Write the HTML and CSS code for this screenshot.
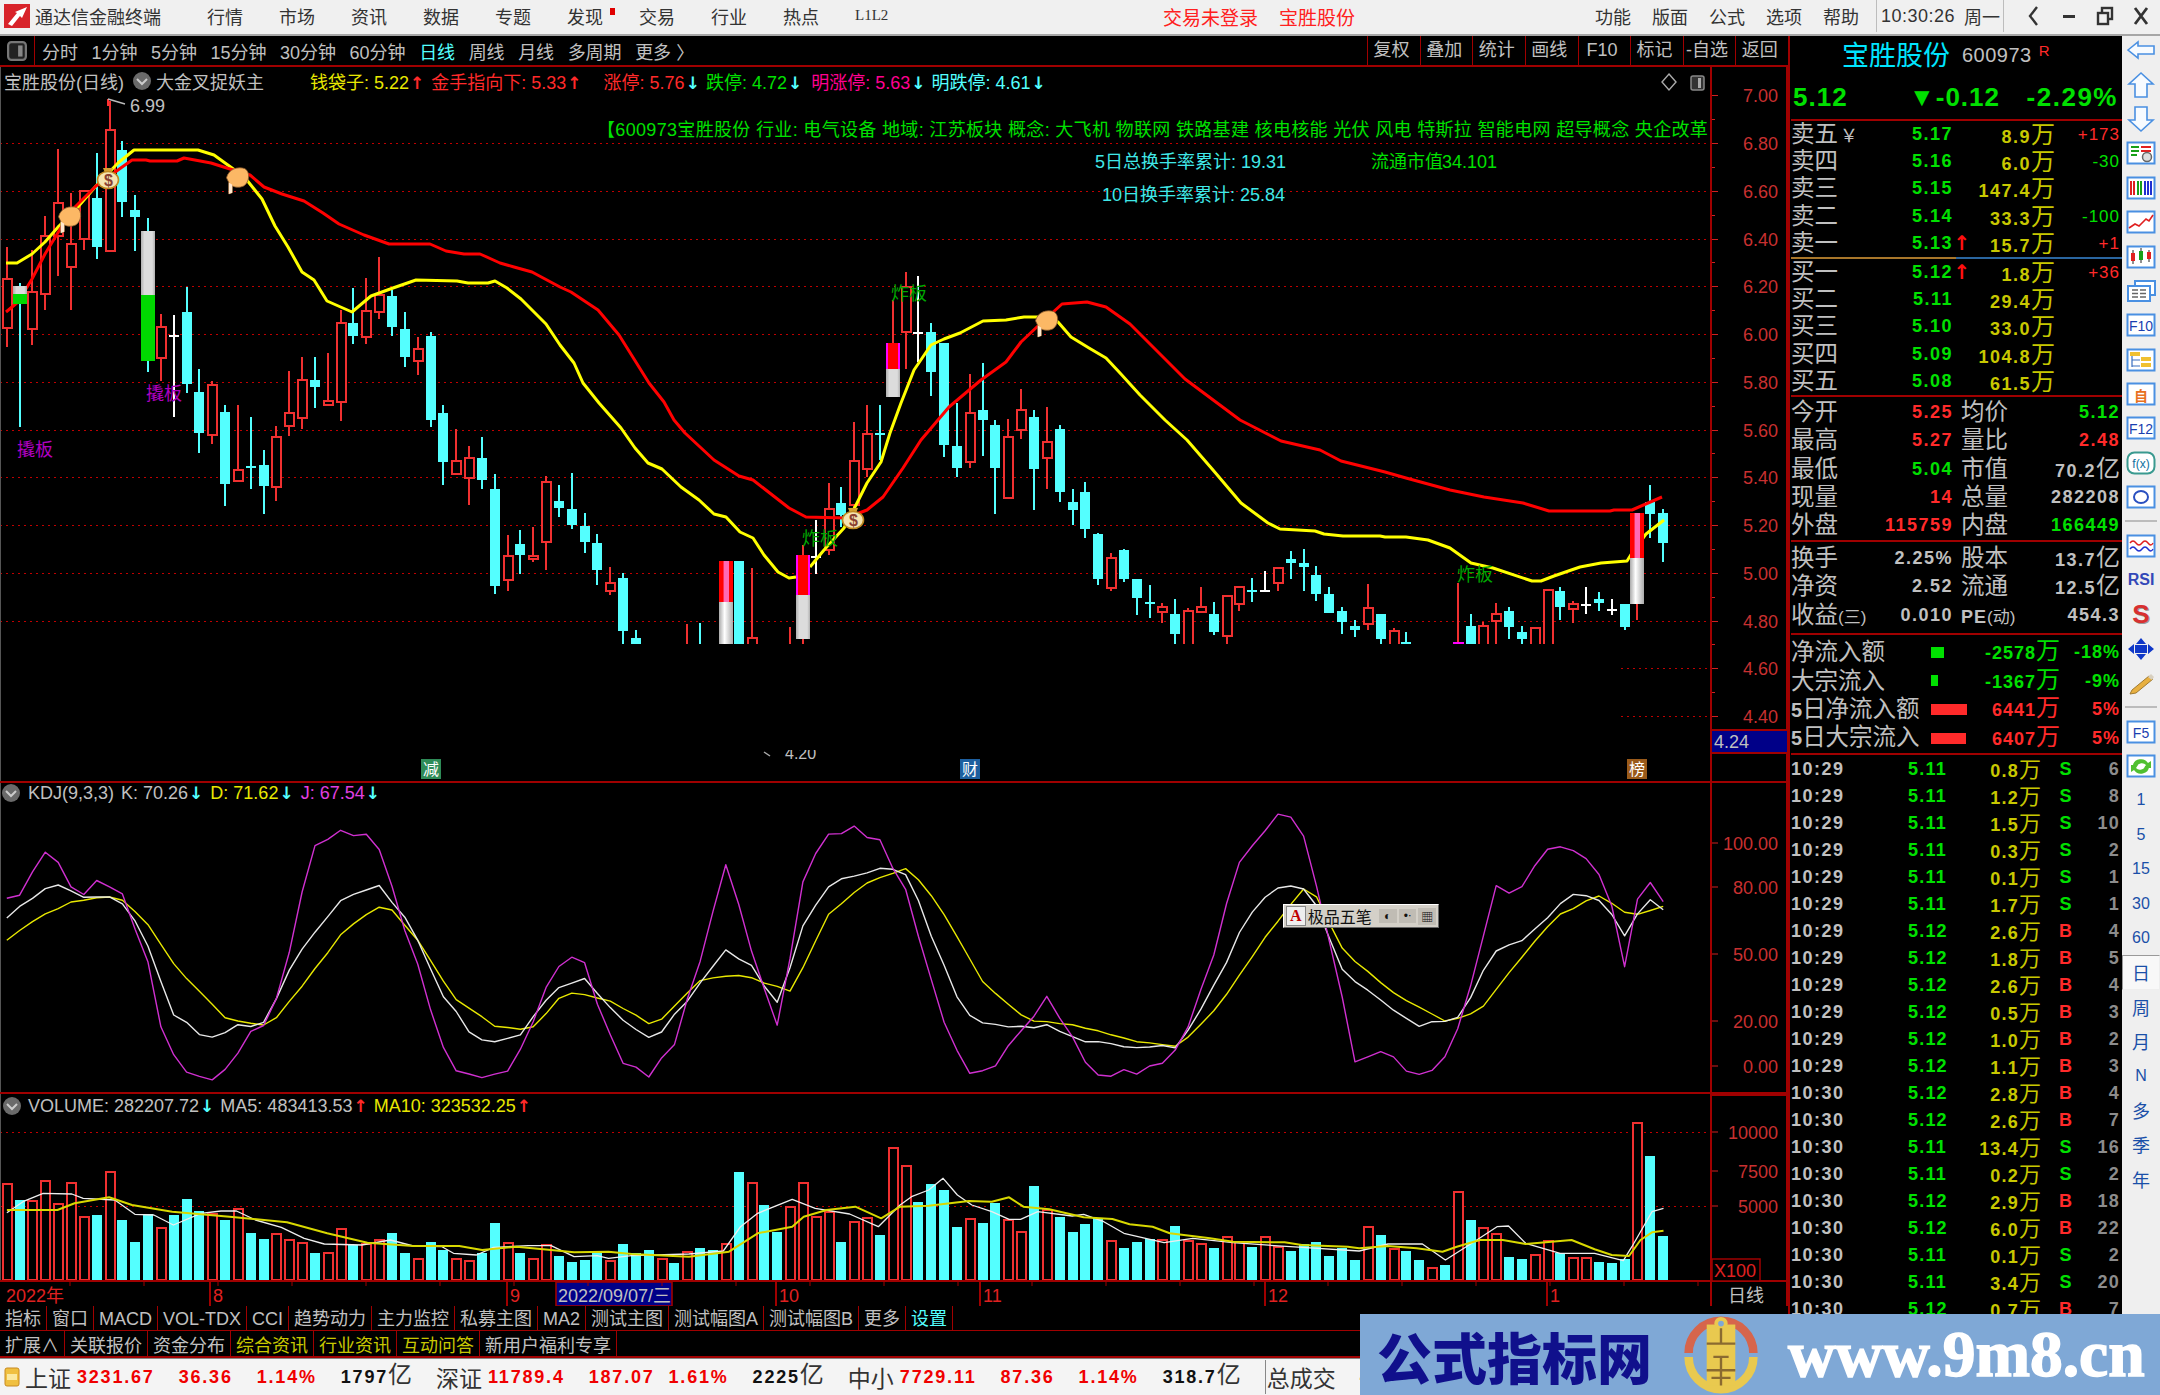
FILE: index.html
```html
<!DOCTYPE html>
<html lang="zh-CN">
<head>
<meta charset="utf-8">
<title>通达信金融终端</title>
<link rel="stylesheet" href="styles.css">
</head>
<body>
<div class="app">
  <header class="titlebar">
    <svg class="logo" viewBox="0 0 26 24"><rect width="26" height="24" fill="#d8232a"/><path d="M4 20 L13 9 L11 8 L23 3 L18 14 L16 12 L8 22Z" fill="#fff"/></svg>
    <span class="appname">通达信金融终端</span>
    <nav class="menu">
      <span>行情</span><span>市场</span><span>资讯</span><span>数据</span><span>专题</span><span class="dotted">发现</span><span>交易</span><span>行业</span><span>热点</span><span class="l1l2">L1L2</span>
    </nav>
    <div class="alerts"><span>交易未登录</span><span>宝胜股份</span></div>
    <div class="sysmenu">
      <span>功能</span><span>版面</span><span>公式</span><span>选项</span><span>帮助</span>
    </div>
    <div class="clock"><span class="time">10:30:26</span><span>周一</span></div>
    <div class="winbtns">
      <svg viewBox="0 0 14 24"><path d="M11 3 L4 12 L11 21" fill="none" stroke="#333" stroke-width="2.4"/></svg>
      <svg viewBox="0 0 14 24"><rect x="1" y="11" width="12" height="3" fill="#333"/></svg>
      <svg viewBox="0 0 18 24"><rect x="6" y="4" width="10" height="11" fill="none" stroke="#333" stroke-width="2.4"/><rect x="2" y="9" width="10" height="11" fill="#f0f0f0" stroke="#333" stroke-width="2.4"/></svg>
      <svg viewBox="0 0 18 24"><path d="M3 4 L15 20 M15 4 L3 20" stroke="#333" stroke-width="2.8"/></svg>
    </div>
  </header>

  <div class="workspace">
    <div class="left">
      <div class="toolbar">
        <div class="tb-icon"><svg viewBox="0 0 18 18"><rect x="1" y="1" width="16" height="16" rx="3" fill="#222" stroke="#777" stroke-width="2"/><rect x="10" y="4" width="4" height="10" fill="#888"/></svg></div>
        <div class="periods">
          <span>分时</span><span>1分钟</span><span>5分钟</span><span>15分钟</span><span>30分钟</span><span>60分钟</span><span class="cyan">日线</span><span>周线</span><span>月线</span><span>多周期</span><span>更多 〉</span>
        </div>
        <div class="tools">
          <span>复权</span><span>叠加</span><span>统计</span><span>画线</span><span>F10</span><span>标记</span><span>-自选</span><span>返回</span>
        </div>
      </div>

      <div class="panes">
        <svg id="chart" class="chart" viewBox="0 67 1788 1239" width="1788" height="1239"></svg>

        <div class="legend legend-main">
          <span class="gray">宝胜股份(日线)</span>
          <svg class="chev" viewBox="0 0 20 20"><circle cx="10" cy="10" r="9" fill="#6a6a6a"/><path d="M5 8 L10 13 L15 8" fill="none" stroke="#ccc" stroke-width="2"/></svg>
          <span class="gray">大金叉捉妖主</span>
          <span class="yellow lg-a">钱袋子: 5.22<i class="red">↑</i></span>
          <span class="red lg-b">金手指向下: 5.33<i class="red">↑</i></span>
          <span class="red lg-c">涨停: 5.76<i class="cyan">↓</i></span>
          <span class="green lg-d">跌停: 4.72<i class="cyan">↓</i></span>
          <span class="pink lg-e">明涨停: 5.63<i class="cyan">↓</i></span>
          <span class="cyan lg-d">明跌停: 4.61<i class="cyan">↓</i></span>
        </div>
        <div class="legend legend-kdj">
          <svg class="chev" viewBox="0 0 20 20"><circle cx="10" cy="10" r="9" fill="#6a6a6a"/><path d="M5 8 L10 13 L15 8" fill="none" stroke="#ccc" stroke-width="2"/></svg>
          <span class="gray">KDJ(9,3,3)</span>
          <span class="gray">K: 70.26<i class="cyan">↓</i></span>
          <span class="yellow">D: 71.62<i class="cyan">↓</i></span>
          <span class="magenta">J: 67.54<i class="cyan">↓</i></span>
        </div>
        <div class="legend legend-vol">
          <svg class="chev" viewBox="0 0 20 20"><circle cx="10" cy="10" r="9" fill="#6a6a6a"/><path d="M5 8 L10 13 L15 8" fill="none" stroke="#ccc" stroke-width="2"/></svg>
          <span class="gray">VOLUME: 282207.72<i class="cyan">↓</i></span>
          <span class="gray">MA5: 483413.53<i class="red">↑</i></span>
          <span class="yellow">MA10: 323532.25<i class="red">↑</i></span>
        </div>

        <div class="ime">
          <span class="ime-a">A</span><span class="ime-t">极品五笔</span>
          <span class="ime-b">◐</span><span class="ime-b">•ᐧ</span><span class="ime-b">▦</span>
        </div>
      </div>

      <div class="tabs tabs-a">
        <span>指标</span><span>窗口</span><span>MACD</span><span>VOL-TDX</span><span>CCI</span><span>趋势动力</span><span>主力监控</span><span>私募主图</span><span>MA2</span><span>测试主图</span><span>测试幅图A</span><span>测试幅图B</span><span>更多</span><span class="cyan">设置</span>
      </div>
      <div class="tabs tabs-b">
        <span>扩展∧</span><span>关联报价</span><span>资金分布</span><span class="olive">综合资讯</span><span class="olive">行业资讯</span><span class="olive">互动问答</span><span>新用户福利专享</span>
      </div>
    </div>

    <section class="quote">
      <div class="q-name"><span class="q-title">宝胜股份</span><span class="q-code">600973</span><sup class="q-r">R</sup></div>
      <div class="q-price"><b class="p1">5.12</b><b class="p2">▼-0.12</b><b class="p3">-2.29%</b></div>

      <div class="book sec-sell">
        <div class="bk"><span class="lb">卖五<small>￥</small></span><b class="g">5.17</b><i></i><b class="y">8.9<em>万</em></b><s class="r">+173</s></div>
        <div class="bk"><span class="lb">卖四</span><b class="g">5.16</b><i></i><b class="y">6.0<em>万</em></b><s class="g">-30</s></div>
        <div class="bk"><span class="lb">卖三</span><b class="g">5.15</b><i></i><b class="y">147.4<em>万</em></b><s></s></div>
        <div class="bk"><span class="lb">卖二</span><b class="g">5.14</b><i></i><b class="y">33.3<em>万</em></b><s class="g">-100</s></div>
        <div class="bk"><span class="lb">卖一</span><b class="g">5.13</b><i>↑</i><b class="y">15.7<em>万</em></b><s class="r">+1</s></div>
      </div>
      <div class="split"></div>
      <div class="book sec-buy">
        <div class="bk"><span class="lb">买一</span><b class="g">5.12</b><i>↑</i><b class="y">1.8<em>万</em></b><s class="r">+36</s></div>
        <div class="bk"><span class="lb">买二</span><b class="g">5.11</b><i></i><b class="y">29.4<em>万</em></b><s></s></div>
        <div class="bk"><span class="lb">买三</span><b class="g">5.10</b><i></i><b class="y">33.0<em>万</em></b><s></s></div>
        <div class="bk"><span class="lb">买四</span><b class="g">5.09</b><i></i><b class="y">104.8<em>万</em></b><s></s></div>
        <div class="bk"><span class="lb">买五</span><b class="g">5.08</b><i></i><b class="y">61.5<em>万</em></b><s></s></div>
      </div>

      <div class="stats sec-a">
        <span class="lb">今开</span><b class="r">5.25</b><span class="lb l2">均价</span><b class="g">5.12</b>
        <span class="lb">最高</span><b class="r">5.27</b><span class="lb l2">量比</span><b class="r">2.48</b>
        <span class="lb">最低</span><b class="g">5.04</b><span class="lb l2">市值</span><b class="w">70.2<em>亿</em></b>
        <span class="lb">现量</span><b class="r">14</b><span class="lb l2">总量</span><b class="w">282208</b>
        <span class="lb">外盘</span><b class="r">115759</b><span class="lb l2">内盘</span><b class="g">166449</b>
      </div>
      <div class="stats sec-b">
        <span class="lb">换手</span><b class="w">2.25%</b><span class="lb l2">股本</span><b class="w">13.7<em>亿</em></b>
        <span class="lb">净资</span><b class="w">2.52</b><span class="lb l2">流通</span><b class="w">12.5<em>亿</em></b>
        <span class="lb">收益<small class="paren">(三)</small></span><b class="w">0.010</b><span class="lb l2"><b class="w pe">PE</b><small class="paren">(动)</small></span><b class="w">454.3</b>
      </div>

      <div class="flow">
        <div class="fl"><span class="lb">净流入额</span><span class="bar barg w13"></span><b class="g">-2578<em>万</em></b><b class="g">-18%</b></div>
        <div class="fl"><span class="lb">大宗流入</span><span class="bar barg w7"></span><b class="g">-1367<em>万</em></b><b class="g">-9%</b></div>
        <div class="fl"><span class="lb"><b class="w">5</b>日净流入额</span><span class="bar barr w36"></span><b class="r">6441<em>万</em></b><b class="r">5%</b></div>
        <div class="fl"><span class="lb"><b class="w">5</b>日大宗流入</span><span class="bar barr w35"></span><b class="r">6407<em>万</em></b><b class="r">5%</b></div>
      </div>

      <div class="ticks">
        <div class="tk"><b class="w">10:29</b><b class="g">5.11</b><b class="y">0.8<em>万</em></b><b class="g bs">S</b><b class="d">6</b></div>
        <div class="tk"><b class="w">10:29</b><b class="g">5.11</b><b class="y">1.2<em>万</em></b><b class="g bs">S</b><b class="d">8</b></div>
        <div class="tk"><b class="w">10:29</b><b class="g">5.11</b><b class="y">1.5<em>万</em></b><b class="g bs">S</b><b class="d">10</b></div>
        <div class="tk"><b class="w">10:29</b><b class="g">5.11</b><b class="y">0.3<em>万</em></b><b class="g bs">S</b><b class="d">2</b></div>
        <div class="tk"><b class="w">10:29</b><b class="g">5.11</b><b class="y">0.1<em>万</em></b><b class="g bs">S</b><b class="d">1</b></div>
        <div class="tk"><b class="w">10:29</b><b class="g">5.11</b><b class="y">1.7<em>万</em></b><b class="g bs">S</b><b class="d">1</b></div>
        <div class="tk"><b class="w">10:29</b><b class="g">5.12</b><b class="y">2.6<em>万</em></b><b class="r bs">B</b><b class="d">4</b></div>
        <div class="tk"><b class="w">10:29</b><b class="g">5.12</b><b class="y">1.8<em>万</em></b><b class="r bs">B</b><b class="d">5</b></div>
        <div class="tk"><b class="w">10:29</b><b class="g">5.12</b><b class="y">2.6<em>万</em></b><b class="r bs">B</b><b class="d">4</b></div>
        <div class="tk"><b class="w">10:29</b><b class="g">5.12</b><b class="y">0.5<em>万</em></b><b class="r bs">B</b><b class="d">3</b></div>
        <div class="tk"><b class="w">10:29</b><b class="g">5.12</b><b class="y">1.0<em>万</em></b><b class="r bs">B</b><b class="d">2</b></div>
        <div class="tk"><b class="w">10:29</b><b class="g">5.12</b><b class="y">1.1<em>万</em></b><b class="r bs">B</b><b class="d">3</b></div>
        <div class="tk"><b class="w">10:30</b><b class="g">5.12</b><b class="y">2.8<em>万</em></b><b class="r bs">B</b><b class="d">4</b></div>
        <div class="tk"><b class="w">10:30</b><b class="g">5.12</b><b class="y">2.6<em>万</em></b><b class="r bs">B</b><b class="d">7</b></div>
        <div class="tk"><b class="w">10:30</b><b class="g">5.11</b><b class="y">13.4<em>万</em></b><b class="g bs">S</b><b class="d">16</b></div>
        <div class="tk"><b class="w">10:30</b><b class="g">5.11</b><b class="y">0.2<em>万</em></b><b class="g bs">S</b><b class="d">2</b></div>
        <div class="tk"><b class="w">10:30</b><b class="g">5.12</b><b class="y">2.9<em>万</em></b><b class="r bs">B</b><b class="d">18</b></div>
        <div class="tk"><b class="w">10:30</b><b class="g">5.12</b><b class="y">6.0<em>万</em></b><b class="r bs">B</b><b class="d">22</b></div>
        <div class="tk"><b class="w">10:30</b><b class="g">5.11</b><b class="y">0.1<em>万</em></b><b class="g bs">S</b><b class="d">2</b></div>
        <div class="tk"><b class="w">10:30</b><b class="g">5.11</b><b class="y">3.4<em>万</em></b><b class="g bs">S</b><b class="d">20</b></div>
        <div class="tk"><b class="w">10:30</b><b class="g">5.12</b><b class="y">0.7<em>万</em></b><b class="r bs">B</b><b class="d">7</b></div>
      </div>
    </section>

    <aside class="sidebar">
      <div class="si first"><svg viewBox="0 0 30 24"><path d="M2 12 L12 4 V8 H28 V16 H12 V20Z" class="ol"/></svg></div>
      <div class="si"><svg viewBox="0 0 30 28"><path d="M15 2 L27 13 H21 V26 H9 V13 H3Z" class="ol"/></svg></div>
      <div class="si"><svg viewBox="0 0 30 28"><path d="M15 26 L27 15 H21 V2 H9 V15 H3Z" class="ol"/></svg></div>
      <div class="si"><svg viewBox="0 0 30 24"><rect x="1.5" y="1.5" width="27" height="21" class="bx"/><path d="M5 6h8M5 10h8M5 14h6" stroke="#18a018" stroke-width="2"/><path d="M15 6h10M15 10h10" stroke="#e02020" stroke-width="2"/><circle cx="21" cy="16" r="4.5" fill="#ddd" stroke="#666" stroke-width="1.5"/></svg></div>
      <div class="si"><svg viewBox="0 0 30 24"><rect x="1.5" y="1.5" width="27" height="21" class="bx"/><path d="M5 5v14M8 5v14" stroke="#e02020" stroke-width="2"/><path d="M12 5v14M15 5v14" stroke="#18a018" stroke-width="2"/><path d="M19 5v14M22 5v14M25 5v14" stroke="#2030d0" stroke-width="2"/></svg></div>
      <div class="si"><svg viewBox="0 0 30 24"><rect x="1.5" y="1.5" width="27" height="21" class="bx"/><path d="M3 18 L9 14 L13 16 L20 9 L23 11 L27 5" fill="none" stroke="#e02020" stroke-width="1.6"/></svg></div>
      <div class="si"><svg viewBox="0 0 30 24"><rect x="1.5" y="1.5" width="27" height="21" class="bx"/><path d="M7 5v14M15 3v15M23 5v12" stroke="#222" stroke-width="1"/><rect x="5" y="8" width="4" height="8" fill="#e02020"/><rect x="13" y="6" width="4" height="9" fill="#18a018"/><rect x="21" y="7" width="4" height="7" fill="#e02020"/></svg></div>
      <div class="si"><svg viewBox="0 0 30 24"><rect x="9" y="2" width="20" height="14" class="bx"/><rect x="2" y="7" width="22" height="15" class="bx"/><path d="M6 11h6M14 11h6M6 14.500h6M14 14.500h6M6 18h6M14 18h6" stroke="#666" stroke-width="1.6"/></svg></div>
      <div class="si"><svg viewBox="0 0 30 24"><rect x="1.5" y="1.5" width="27" height="21" class="bx"/><text x="15" y="18" class="ict">F10</text></svg></div>
      <div class="si"><svg viewBox="0 0 30 24"><rect x="1.5" y="1.5" width="27" height="21" class="bx"/><path d="M6 8 V19 M6 12 H14 M6 18 H14" stroke="#3a70c0" stroke-width="1.2" fill="none"/><rect x="4" y="4" width="10" height="4" fill="#f0c030"/><rect x="15" y="9" width="10" height="4" fill="#f0c030"/><rect x="15" y="15" width="10" height="4" fill="#f0c030"/></svg></div>
      <div class="si"><svg viewBox="0 0 30 24"><rect x="1.5" y="1.5" width="27" height="21" class="bx"/><text x="15" y="18.500" class="ict org">自</text></svg></div>
      <div class="si"><svg viewBox="0 0 30 24"><rect x="1.5" y="1.5" width="27" height="21" class="bx"/><text x="15" y="18" class="ict">F12</text></svg></div>
      <div class="si"><svg viewBox="0 0 30 24"><rect x="1.5" y="1.5" width="27" height="21" rx="7" class="bxt"/><text x="15" y="17" class="ict teal">f(x)</text></svg></div>
      <div class="si"><svg viewBox="0 0 30 24"><rect x="1.5" y="1.5" width="27" height="21" class="bx"/><ellipse cx="15" cy="12" rx="7" ry="6" fill="none" stroke="#2a50c0" stroke-width="2"/></svg></div>
      <div class="sep"></div>
      <div class="si"><svg viewBox="0 0 30 24"><rect x="1.5" y="1.5" width="27" height="21" class="bx"/><path d="M4 9 Q7 5 10 9 T16 9 T22 9 T27 9" fill="none" stroke="#e02020" stroke-width="1.4"/><path d="M4 15 Q7 11 10 15 T16 15 T22 15 T27 15" fill="none" stroke="#2030d0" stroke-width="1.4"/></svg></div>
      <div class="si"><span class="rsi">RSI</span></div>
      <div class="si"><span class="sred">S</span></div>
      <div class="si"><svg viewBox="0 0 30 24"><path d="M15 1 L20 7 H10Z M15 23 L20 17 H10Z M2 12 L8 7 V17Z M28 12 L22 7 V17Z" fill="#1038c8"/><rect x="9" y="8" width="12" height="8" fill="#1038c8"/></svg></div>
      <div class="si"><svg viewBox="0 0 30 24"><path d="M6 19 L23 5 L27 8 L10 22 L4 23Z" fill="#e8b040" stroke="#a07a30"/><path d="M22 6 L26 9 L28 6 L25 3Z" fill="#d8d0c0"/></svg></div>
      <div class="sep"></div>
      <div class="si"><svg viewBox="0 0 30 24"><rect x="1.5" y="1.5" width="27" height="21" class="bx"/><text x="15" y="18" class="ict">F5</text></svg></div>
      <div class="si"><svg viewBox="0 0 30 24"><rect x="1.5" y="1.5" width="27" height="21" class="bx"/><path d="M7 11 A8 7 0 0 1 22 9 L25 7 L25 14 L18 14 L20 11 A5 4 0 0 0 11 12Z M23 13 A8 7 0 0 1 8 16 L5 18 L5 11 L12 11 L10 14 A5 4 0 0 0 19 12Z" fill="#50c030"/></svg></div>
      <div class="si num">1</div><div class="si num">5</div><div class="si num">15</div><div class="si num">30</div><div class="si num">60</div>
      <div class="si zh active">日</div><div class="si zh">周</div><div class="si zh">月</div><div class="si num">N</div><div class="si zh">多</div><div class="si zh">季</div><div class="si zh">年</div>
    </aside>
  </div>

  <footer class="status">
    <svg class="st-ic" viewBox="0 0 16 20"><rect x="1" y="1" width="14" height="18" rx="2" fill="#f0c040" stroke="#c88a20"/><rect x="3" y="7" width="10" height="6" fill="#fbe9a0"/></svg>
    <span class="st-l">上证</span><b>3231.67</b><b>36.36</b><b>1.14%</b><b class="k">1797<em>亿</em></b>
    <span class="st-l">深证</span><b>11789.4</b><b>187.07</b><b class="st-tight">1.61%</b><b class="k">2225<em>亿</em></b>
    <span class="st-l">中小</span><b>7729.11</b><b>87.36</b><b>1.14%</b><b class="k">318.7<em>亿</em></b>
    <span class="st-div"></span><span class="st-l st-t">总成交</span><b class="k">4</b>
  </footer>

  <div class="watermark">
    <span class="wm-cn">公式指标网</span>
    <svg class="wm-logo" viewBox="0 0 80 84">
      <path d="M6 40 A34 34 0 0 1 74 40" fill="none" stroke="#d6654c" stroke-width="9"/>
      <path d="M6 44 A34 34 0 0 0 74 44" fill="none" stroke="#e9c94f" stroke-width="9"/>
      <rect x="25" y="10" width="30" height="64" fill="#e9c94f"/>
      <circle cx="40" cy="9" r="7" fill="#e9c94f"/><circle cx="40" cy="9" r="3" fill="#7fa8d6"/>
      <path d="M25 30 H55 M40 14 V30 M32 44 H48 M25 58 H55 M40 44 V74 M30 66 L50 66" stroke="#8a6a30" stroke-width="2.500" fill="none"/>
    </svg>
    <span class="wm-en">www.9m8.cn</span>
  </div>
</div>
<script src="chart.js"></script>
</body>
</html>
```
FILE: styles.css
```css
* { box-sizing: border-box; }
html, body { margin: 0; padding: 0; background: #000; }
body { width: 2160px; height: 1395px; overflow: hidden; font-family: "Liberation Sans", "Noto Sans CJK SC", sans-serif; font-size: 18px; color: #c0c0c0; }
i, em, s { font-style: normal; text-decoration: none; }
.app { position: relative; width: 2160px; height: 1395px; display: flex; flex-direction: column; }

.cyan { color: #54ffff; }
.gray { color: #c0c0c0; }
.yellow { color: #e8e800; }
.red { color: #ff2a2a; }
.green { color: #00e000; }
.pink { color: #ff0090; }
.magenta { color: #e040e0; }
.olive { color: #c8c800; }

/* title bar */
.titlebar { height: 36px; flex: none; display: flex; align-items: center; padding-bottom: 2px; background: #f0f0f0; border-bottom: 2px solid #a6a6a6; color: #333; }
.logo { width: 26px; height: 24px; margin-left: 4px; flex: none; }
.appname { margin-left: 5px; width: 127px; white-space: nowrap; }
.menu { display: flex; gap: 36px; margin-left: 45px; width: 686px; }
.menu span { white-space: nowrap; }
.dotted { position: relative; }
.dotted::after { content: ""; position: absolute; right: -12px; top: 5px; width: 5px; height: 7px; background: #e00000; }
.l1l2 { font-size: 15px; font-family: "Liberation Serif", serif; line-height: 24px; }
.alerts { display: flex; gap: 21px; margin-left: 270px; color: #ff2020; white-space: nowrap; font-size: 19px; }
.sysmenu { display: flex; gap: 21px; margin-left: 240px; white-space: nowrap; }
.clock { display: flex; gap: 8px; align-items: center; margin-left: 17px; padding: 0 3px 0 4px; height: 32px; border-left: 1px solid #bdbdbd; border-right: 1px solid #bdbdbd; white-space: nowrap; }
.time { letter-spacing: .5px; width: 75px; }
.winbtns { display: flex; align-items: center; gap: 18px; margin-left: 20px; }
.winbtns svg { height: 24px; width: 18px; }

/* layout */
.workspace { flex: 1; display: flex; min-height: 0; }
.left { width: 1788px; flex: none; display: flex; flex-direction: column; }
.toolbar { height: 31px; flex: none; display: flex; align-items: center; background: #000; border-bottom: 2px solid #a00000; }
.tb-icon { width: 35px; height: 29px; border-right: 1px solid #a00000; display: flex; align-items: center; justify-content: center; flex: none; }
.tb-icon svg { width: 20px; height: 20px; }
.periods { display: flex; gap: 13.500px; margin-left: 7px; white-space: nowrap; flex: 1; }
.tools { display: flex; flex: none; height: 29px; }
.tools span { width: 52.600px; padding-right: 5px; border-left: 1px solid #a00000; text-align: center; line-height: 29px; white-space: nowrap; }

.panes { position: relative; height: 1239px; flex: none; background: #000; }
.chart { display: block; }
.legend { position: absolute; left: 0; display: flex; align-items: center; height: 22px; white-space: nowrap; }
.legend i { margin-left: 1px; font-family: "DejaVu Sans", sans-serif; font-weight: bold; font-size: 17px; }
.chev { width: 20px; height: 20px; flex: none; }
.legend-main { top: 3px; padding-left: 4px; gap: 8px; }
.legend-main .chev { margin-right: -4px; }
.lg-a { margin-left: 38px; }
.lg-b { margin-left: -1px; }
.lg-c { margin-left: 14px; }
.lg-d { margin-left: -2px; }
.lg-e { margin-left: 1px; }
.legend-kdj { top: 715px; padding-left: 1px; gap: 7px; }
.legend-vol { top: 1028px; padding-left: 2px; gap: 6px; }
.ime { position: absolute; left: 1283px; top: 837px; width: 156px; height: 24px; display: flex; align-items: center; gap: 2px; padding: 0 2px; background: #d4d0c8; border: 1px solid; border-color: #fff #666 #666 #fff; color: #111; font-size: 16px; }
.ime-a { width: 20px; text-align: center; color: #c00000; background: #eee; border: 1px solid #888; font-family: "Liberation Serif", serif; font-weight: bold; }
.ime-t { width: 70px; white-space: nowrap; }
.ime-b { width: 18px; font-size: 12px; text-align: center; background: #c0bcb4; overflow: hidden; white-space: nowrap; }

.tabs { flex: none; display: flex; background: #000; border-bottom: 2px solid #a00000; white-space: nowrap; }
.tabs span { padding: 0 5px; border-right: 1px solid #a00000; }
.tabs-a { height: 25px; line-height: 26px; border-bottom-width: 1px; }
.tabs-b { height: 27px; line-height: 30px; }

/* quote panel */
.quote { width: 334px; flex: none; display: flex; flex-direction: column; background: #000; border-left: 2px solid #a00000; overflow: hidden; padding-left: 1px; }
.q-name { height: 30px; flex: none; display: flex; align-items: center; padding: 9px 0 0 51px; white-space: nowrap; }
.q-title { color: #00e5ff; font-size: 27px; width: 120px; line-height: 30px; }
.q-code { color: #c0c0c0; font-size: 20px; letter-spacing: .5px; }
.q-r { color: #ff2a2a; font-size: 15px; margin-left: 7px; position: relative; top: -5px; line-height: 10px; }
.q-price { height: 55px; flex: none; display: flex; align-items: center; border-bottom: 2px solid #a00000; padding: 9px 4px 0 2px; color: #00e000; font-size: 26px; white-space: nowrap; letter-spacing: 1px; }
.p1 { width: 116px; }
.p2 { width: 107px; }
.p3 { flex: 1; text-align: right; letter-spacing: 1.500px; }

.book { flex: none; padding-right: 4px; }
.bk { display: grid; grid-template-columns: 70px 90px 18px 84px 65px; height: 27.200px; line-height: 27.200px; padding-left: 2px; white-space: nowrap; }
.lb { font-size: 23.500px; color: #c0c0c0; white-space: nowrap; margin-left: -2px; }
.lb small { font-size: 18px; margin-left: 2px; }
.lb .paren { font-size: 17px; margin-left: 0; }
.bk b, .bk s { text-align: right; letter-spacing: 1.500px; font-weight: bold; }
.bk s { font-weight: normal; font-size: 17px; letter-spacing: 1px; }
.bk i { color: #ff1010; font-family: "DejaVu Sans", sans-serif; font-weight: bold; text-align: center; font-size: 20px; }
b { font-weight: bold; }
.g { color: #00e000; }
.r { color: #ff2a2a; }
.y { color: #c8c800; }
.w { color: #c0c0c0; }
.d { color: #8c8c8c; }
em { font-size: 24px; font-weight: normal; letter-spacing: 0; }
.sec-sell { height: 136px; }
.split { height: 2px; flex: none; background: linear-gradient(to right, #a8762a 0 50%, #2a66a0 50% 100%); }
.sec-buy { height: 138px; border-bottom: 2px solid #a00000; }

.stats { flex: none; display: grid; grid-template-columns: 60px 100px 68px 99px; grid-auto-rows: 28.300px; line-height: 28.300px; padding-left: 2px; border-bottom: 2px solid #a00000; white-space: nowrap; }
.stats > b { text-align: right; letter-spacing: 1.500px; }
.stats .l2 { padding-left: 8px; margin-left: 0; }
.stats .pe { font-size: 18px; letter-spacing: 1px; }
.sec-a { height: 145px; padding-top: 1px; }
.sec-b { height: 93px; padding-top: 2px; }

.flow { flex: none; height: 120px; padding: 2px 0 0 2px; border-bottom: 2px solid #a00000; }
.fl { display: grid; grid-template-columns: 138px 52px 77px 60px; height: 28.600px; line-height: 28.600px; align-items: center; white-space: nowrap; }
.fl > b { text-align: right; letter-spacing: 1px; }
.fl .lb b { font-size: 20px; }
.bar { display: block; height: 11px; }
.barg { background: #00e000; }
.barr { background: #ff2a2a; }
.w13 { width: 13px; }
.w7 { width: 7px; }
.w36 { width: 36px; }
.w35 { width: 35px; }

.ticks { flex: none; padding-top: 1px; }
.tk { display: grid; grid-template-columns: 115px 50px 83px 50px 29px; height: 27px; line-height: 27px; padding-left: 2px; white-space: nowrap; }
.tk b { letter-spacing: 1.200px; }
.tk b:first-child { margin-left: -2px; letter-spacing: 1.500px; }
.tk b:nth-child(3), .tk b:nth-child(5) { text-align: right; }
.tk em { font-size: 22px; }
.tk .bs { text-align: center; }

/* right sidebar */
.sidebar { width: 38px; flex: none; background: #efefef; display: flex; flex-direction: column; align-items: center; }
.si { height: 34.400px; width: 100%; flex: none; display: flex; align-items: center; justify-content: center; }
.si.first { margin-top: -3px; }
.si svg { width: 30px; height: 28px; }
.sep { height: 14px; width: 32px; flex: none; position: relative; }
.sep::after { content: ""; position: absolute; left: 0; right: 0; top: 6px; height: 2px; background: #bcbcbc; }
.ol { fill: #f7fbff; stroke: #4a90e2; stroke-width: 1.6; }
.bx { fill: #fff; stroke: #4a90e2; stroke-width: 2; }
.bxt { fill: #fff; stroke: #3a9a90; stroke-width: 2; }
.ict { font: 14px "Liberation Sans", sans-serif; fill: #1a3fb0; text-anchor: middle; }
.org { fill: #e87020; font-family: "Noto Sans CJK SC", sans-serif; font-weight: bold; }
.teal { fill: #1070a0; font-size: 12px; }
.rsi { color: #3348b8; font-weight: bold; font-size: 16px; }
.sred { color: #d83030; font-weight: bold; font-size: 26px; text-shadow: 1px 1px 0 #999; }
.num { color: #1a4fa8; font-size: 16px; }
.zh { color: #1a4fa8; font-size: 18px; }
.active { background: #f8f8f8; border: 1px solid; border-color: #999 #eee #eee #999; }

/* status */
.status { height: 37px; flex: none; display: flex; align-items: center; gap: 24px; background: #f4f4f4; border-top: 1px solid #888; white-space: nowrap; overflow: hidden; }
.status b { color: #f00000; font-size: 18px; letter-spacing: 1.800px; }
.status b.k { color: #111; }
.status em { color: #333; letter-spacing: 0; line-height: 0; }
.st-ic { width: 16px; height: 20px; margin: 0 -19px 0 4px; flex: none; }
.st-l { font-size: 23px; color: #333; margin-right: -18px; }
.status .st-tight { margin-left: -10px; }
.st-t { margin-right: 0; margin-left: -23px; }
.st-div { width: 1px; height: 34px; background: #888; margin-right: 0; }

/* watermark */
.watermark { position: absolute; left: 1360px; top: 1314px; right: 0; bottom: 0; display: flex; align-items: center; background: #7fa8d6; overflow: hidden; }
.wm-cn { margin-left: 17px; width: 304px; font-family: "Noto Sans CJK SC", sans-serif; font-weight: 900; font-size: 55px; line-height: 80px; color: #10108c; white-space: nowrap; }
.wm-logo { width: 80px; height: 80px; flex: none; }
.wm-en { margin-left: 27px; font-family: "Liberation Serif", serif; font-weight: bold; font-size: 65.500px; color: #fff; -webkit-text-stroke: 1.500px #fff; white-space: nowrap; }

/* chart text */
.chart text { font-family: "Liberation Sans", "Noto Sans CJK SC", sans-serif; font-size: 18px; }
.ax { fill: #c83030; text-anchor: end; }
.tx-g { fill: #00e000; }
.chart .tx-long { letter-spacing: .33px; }
.tx-c { fill: #40e8e8; }
.tx-lg { fill: #00a800; }
.tx-p { fill: #b000c0; }
.tx-w { fill: #c0c0c0; }
.tx-r { fill: #e02020; }
.tx-k { fill: #fff; text-anchor: middle; }
.chart text.sm { font-size: 16px; }
```
FILE: chart.js
```js
(function () {
  var svg = document.getElementById('chart');
  var cx = function (i) { return Math.round(6.8 + 12.84 * i); };
  var RED = '#f03030', CY = '#54ffff', DK = '#a00000';
  // [i, high, bodyTop, bodyBottom, low, type]  r hollow red, c cyan, w white doji, n cyan doji, m magenta doji
  var K = [
    [0,247,279,328,347,'r'],[2,250,292,329,345,'r'],[3,216,236,294,310,'r'],[4,149,203,236,276,'r'],[5,193,244,267,310,'r'],[6,191,191,239,250,'r'],
    [7,153,198,247,259,'c'],[8,101,130,251,251,'r'],[9,141,150,202,217,'c'],[10,195,210,217,251,'c'],[12,314,327,358,381,'r'],[13,315,335,335,417,'w'],
    [14,287,312,384,393,'c'],[15,369,392,433,453,'c'],[16,381,385,435,444,'r'],[17,405,412,484,506,'c'],[18,405,470,481,481,'r'],[19,417,466,466,489,'n'],
    [20,450,465,486,514,'c'],[21,426,437,487,501,'r'],[22,371,413,426,436,'r'],[23,357,380,418,429,'r'],[24,357,380,387,408,'c'],[25,353,401,405,405,'r'],
    [26,310,323,402,421,'r'],[27,288,323,336,344,'c'],[28,278,311,337,344,'r'],[29,257,295,312,319,'r'],[30,290,296,327,336,'c'],[31,312,329,357,367,'c'],
    [32,337,349,361,375,'r'],[33,332,336,420,427,'c'],[34,405,413,462,485,'c'],[35,429,461,474,474,'r'],[36,446,458,478,505,'r'],[37,437,458,480,489,'c'],
    [38,474,489,586,594,'c'],[39,535,556,580,591,'r'],[40,530,544,555,574,'c'],[41,527,556,559,562,'r'],[42,476,482,542,570,'r'],[43,485,501,508,517,'c'],
    [44,473,509,525,529,'c'],[45,513,526,542,553,'c'],[46,534,543,570,585,'c'],[47,567,583,591,595,'r'],[48,573,578,631,650,'c'],[49,630,638,660,660,'c'],
    [53,624,660,660,660,'r'],[54,623,660,660,660,'n'],[57,561,561,660,660,'c'],[58,568,638,660,660,'r'],[61,627,660,660,660,'r'],
    [63,520,556,556,574,'w'],[64,483,509,550,555,'r'],[65,487,503,515,527,'c'],[66,422,461,505,515,'r'],[67,405,434,469,477,'r'],[68,405,433,433,460,'n'],
    [70,272,287,332,369,'r'],[71,276,332,332,362,'w'],[72,323,332,372,396,'c'],[73,343,343,445,457,'c'],[74,403,446,468,477,'c'],[75,374,413,462,468,'r'],
    [76,363,410,420,456,'c'],[77,420,425,468,514,'c'],[78,419,437,498,498,'r'],[79,389,410,430,439,'r'],[80,410,417,469,510,'c'],[81,407,442,458,489,'r'],
    [82,425,429,492,502,'c'],[83,489,502,510,525,'c'],[84,482,492,529,538,'c'],[85,533,534,579,585,'c'],[86,553,558,588,591,'r'],
    [87,549,550,579,582,'c'],[88,579,579,598,615,'c'],[89,585,602,602,618,'n'],[90,603,607,612,623,'r'],[91,599,614,634,650,'c'],[92,608,611,655,655,'r'],
    [93,587,607,612,612,'r'],[94,602,614,632,635,'c'],[95,596,596,636,650,'r'],[96,587,587,604,611,'r'],[97,578,590,590,602,'n'],[98,571,590,590,590,'w'],
    [99,568,568,583,591,'r'],[100,551,559,563,579,'c'],[101,549,563,567,591,'c'],[102,566,575,594,601,'c'],[103,587,594,613,613,'c'],[104,607,611,622,634,'c'],
    [105,620,626,630,637,'c'],[106,584,608,624,630,'r'],[107,614,614,639,650,'c'],[108,628,631,655,655,'r'],[109,632,642,655,655,'c'],
    [113,583,642,642,660,'m'],[114,614,626,660,660,'c'],[115,622,626,660,660,'r'],[116,603,614,621,650,'r'],[117,607,611,627,639,'c'],[118,626,632,639,650,'c'],
    [119,628,628,660,660,'r'],[120,590,590,660,660,'r'],[121,587,591,607,620,'c'],[122,601,604,609,623,'r'],[123,587,604,604,614,'w'],[124,592,599,603,611,'c'],
    [125,599,609,609,615,'w'],[126,604,604,627,630,'c'],[128,485,502,514,538,'c'],[129,509,513,543,562,'c']
  ];
  // [i, top, mid, bottom, wickTop, wickBottom, topFill, bottomFill]
  var SP = [
    [1,286,294,304,283,427,'url(#gw)','#00d800',CY],
    [11,231,295,361,218,372,'url(#gw)','#00d800',CY],
    [56,561,602,650,561,561,'url(#pk)','url(#wh)',RED],
    [62,555,595,639,545,650,'url(#mg)','url(#gw)',RED],
    [69,343,369,397,300,397,'url(#mg)','url(#gw)',RED],
    [127,513,558,604,513,620,'url(#pk)','url(#wh)',RED]
  ];
  var YEL = [[6,263],[17,263],[32,254],[45,242],[59,226],[77,208],[96,186],[118,163],[134,150],[198,150],[214,155],[232,168],[246,179],[262,199],[275,226],[288,247],[302,272],[314,280],[327,301],[352,312],[371,296],[393,288],[416,280],[457,281],[468,283],[488,283],[495,281],[507,288],[521,299],[546,324],[560,345],[574,363],[583,383],[599,403],[621,428],[635,448],[648,463],[662,469],[681,487],[699,500],[714,514],[726,517],[740,532],[753,538],[764,555],[778,572],[789,578],[796,577],[810,567],[824,550],[844,528],[856,505],[867,483],[881,462],[890,433],[901,403],[914,370],[931,345],[944,339],[960,333],[983,321],[1006,320],[1024,317],[1040,317],[1058,322],[1071,337],[1089,348],[1106,358],[1120,373],[1140,395],[1165,420],[1187,440],[1213,470],[1241,503],[1268,523],[1280,529],[1315,531],[1324,534],[1343,536],[1380,536],[1385,537],[1406,537],[1428,540],[1450,548],[1471,563],[1493,568],[1532,581],[1541,581],[1554,576],[1580,567],[1601,563],[1627,561],[1632,553],[1646,534],[1664,520]];
  var REDL = [[6,312],[18,302],[32,279],[45,254],[59,231],[71,211],[96,186],[118,170],[132,160],[146,160],[150,161],[177,161],[184,158],[211,163],[230,169],[250,175],[264,187],[282,194],[304,201],[323,213],[339,224],[364,235],[389,244],[430,244],[446,251],[464,254],[480,254],[500,263],[514,267],[532,272],[560,287],[571,292],[598,310],[619,335],[649,383],[664,402],[674,420],[685,433],[714,460],[739,476],[753,480],[789,508],[806,517],[846,518],[867,510],[883,497],[903,468],[921,440],[949,407],[981,380],[1006,362],[1021,342],[1039,325],[1062,304],[1087,302],[1106,307],[1130,324],[1185,379],[1240,420],[1281,441],[1320,450],[1341,461],[1385,472],[1406,478],[1450,490],[1484,497],[1523,503],[1549,511],[1610,511],[1614,510],[1632,510],[1662,497]];
  var K_J = [[5,652],[15,648],[30,620],[42,625],[55,650],[75,640],[90,650],[105,690],[120,760],[135,775],[150,788],[165,775],[180,750],[195,745],[210,690],[225,620],[245,602],[260,605],[275,615],[290,660],[310,725],[325,770],[345,785],[370,775],[385,750],[400,705],[420,690],[440,745],[455,775],[470,782],[490,755],[505,710],[527,625],[545,690],[565,745],[585,630],[600,605],[620,603],[640,610],[660,655],[680,725],[700,780],[720,775],[745,745],[760,722],[775,750],[795,780],[820,780],[855,765],[880,695],[900,625],[915,605],[930,590],[945,600],[960,660],[975,730],[985,775],[1000,760],[1010,770],[1030,780],[1050,770],[1065,725],[1085,645],[1100,650],[1120,618],[1145,615],[1165,640],[1180,702],[1190,645],[1200,638],[1208,660]];
  var K_K = [[5,665],[20,655],[40,640],[60,652],[85,650],[105,680],[125,735],[150,755],[170,745],[190,745],[215,695],[245,655],[275,642],[300,675],[320,720],[345,755],[375,755],[400,720],[425,710],[450,740],[475,755],[500,725],[525,690],[545,700],[565,730],[585,665],[605,640],[640,630],[660,635],[680,690],[700,735],[720,745],[760,745],[785,755],[820,760],[855,760],[885,710],[905,665],[930,642],[950,645],[975,705],[1000,725],[1030,745],[1060,738],[1085,690],[1110,680],[1140,648],[1165,655],[1180,680],[1195,652],[1208,660]];
  var K_D = [[5,682],[25,668],[50,655],[85,650],[105,668],[130,705],[165,740],[195,745],[220,715],[250,675],[280,655],[305,685],[330,725],[360,745],[385,748],[410,720],[440,725],[475,745],[510,710],[540,708],[575,720],[600,665],[630,640],[660,630],[680,655],[715,715],[745,740],[785,745],[820,755],[855,760],[885,730],[915,685],[950,640],[975,690],[1010,720],[1050,742],[1075,733],[1100,700],[1130,665],[1160,650],[1185,665],[1208,658]];
  // volume bar tops in two stretched crops
  var V1 = 'R283 C331 R333 R273 R341 R278 R381 C376 R247 C390 C457 C373 R413 C376 C327 C363 R372 C390 R358 C430 C448 R431 R450 R458 C489 R490 R418 C465 R462 R450 C430 C489 R508 C457 C480 R508 R513 C490 C399 R458 C489 R508 R465 C497 C515 C510 C485 R513 C461 C490 C480 R508 C520 R485 C475 C480 R462 C246 R278 C345 C425 R350 R278 R380 R367 C457 R395 R385 C435 R175 R229 C335 C283 C300 C412 R387 C398 C340 R390 R427 C287 R360 C380 C425 C403 C385 R453 C475 C457 C447 R450 C407 R454 R463 C475 R440 R455 C470 R440 R472 C484 C463 C457 C497 C475 C511 R412 C435 R477 C484 C511 R535 C524 R305 C390 R413 R432 C502 C507 R494 R454 C490 R504 R504 C516 C520 C507 R98 C197 C439'.split(' ');
  var z1 = function (a) { return a.map(function (p) { return [p[0] / 1.742, 1090 + p[1] / 3]; }); };
  var z2 = function (a) { return a.map(function (p) { return [900 + p[0] / 1.742, 1090 + p[1] / 3]; }); };
  var VW = z1([[12,368],[40,335],[75,310],[125,312],[145,325],[200,330],[235,373],[268,375],[302,405],[350,370],[385,363],[412,363],[445,390],[490,412],[530,445],[565,462],[630,465],[680,450],[720,468],[770,470],[790,490],[830,495],[860,472],[920,467],[960,467],[1000,500],[1040,497],[1060,505],[1100,497],[1200,492],[1260,483],[1290,410],[1320,370],[1380,328],[1420,355],[1480,372],[1530,410],[1568,345]]).concat(z2([[20,320],[50,300],[75,265],[100,315],[125,345],[160,365],[190,388],[210,388],[240,365],[300,378],[320,373],[355,395],[390,430],[460,458],[510,445],[580,458],[680,470],[800,483],[850,462],[910,462],[950,510],[1000,455],[1040,410],[1060,408],[1090,460],[1150,490],[1210,490],[1260,512],[1275,470],[1310,365],[1330,355]]));
  var VY = z1([[12,360],[100,360],[130,340],[190,322],[230,345],[300,365],[400,380],[500,397],[570,430],[640,458],[720,468],[800,468],[840,480],[900,470],[960,480],[1000,487],[1060,485],[1100,492],[1200,500],[1270,485],[1320,430],[1380,410],[1400,380],[1440,360],[1490,350],[1535,385],[1568,350]]).concat(z2([[50,347],[120,333],[160,335],[190,322],[215,350],[260,358],[320,382],[370,387],[400,403],[440,410],[470,430],[540,445],[580,455],[670,457],[700,465],[780,470],[800,475],[850,468],[900,475],[945,485],[970,470],[1010,450],[1050,450],[1090,462],[1170,450],[1210,478],[1240,495],[1270,498],[1290,450],[1310,427],[1330,422]]));

  var s = '<defs>' +
    '<linearGradient id="gw"><stop offset="0" stop-color="#b0b0b0"/><stop offset=".25" stop-color="#dcdcdc"/><stop offset=".8" stop-color="#dcdcdc"/><stop offset="1" stop-color="#b0b0b0"/></linearGradient>' +
    '<linearGradient id="wh"><stop offset="0" stop-color="#aaa"/><stop offset=".4" stop-color="#fff"/><stop offset="1" stop-color="#aaa"/></linearGradient>' +
    '<linearGradient id="pk"><stop offset="0" stop-color="#f00"/><stop offset=".3" stop-color="#f00"/><stop offset=".35" stop-color="#ff69b4"/><stop offset=".7" stop-color="#ff69b4"/><stop offset=".75" stop-color="#f00"/><stop offset="1" stop-color="#f00"/></linearGradient>' +
    '<linearGradient id="mg"><stop offset="0" stop-color="#f0f"/><stop offset=".12" stop-color="#f0f"/><stop offset=".13" stop-color="#f00"/><stop offset=".87" stop-color="#f00"/><stop offset=".88" stop-color="#f0f"/><stop offset="1" stop-color="#f0f"/></linearGradient>' +
    '<g id="hand"><g transform="scale(1.15)"><path d="M-10 -1 C-8 -9 0 -11 6 -9 C11 -6 10 3 5 6 C1 8 -3 7 -5 6 L-5 12 L-8 13 L-8 3 Z" fill="#fcb865" stroke="#8a5a2a" stroke-width=".7"/><path d="M-8 3 L-8 13 L-5 12 L-5 5Z" fill="#ffe8d0"/></g></g>' +
    '<g id="bag"><path d="M-5 -11 L5 -11 L3 -6 L-3 -6Z" fill="#d8a030"/><ellipse cx="0" cy="1" rx="10.500" ry="8.500" fill="#f5e3b0" stroke="#c08a20" stroke-width="1.6"/></g>' +
    '</defs>';

  var line = function (x1, y1, x2, y2, c, w, extra) {
    return '<line x1="' + x1 + '" y1="' + y1 + '" x2="' + x2 + '" y2="' + y2 + '" stroke="' + c + '" stroke-width="' + (w || 1) + '" ' + (extra || '') + '/>';
  };
  var poly = function (pts, c, w, extra) {
    return '<polyline points="' + pts.map(function (p) { return p[0].toFixed(1) + ',' + p[1].toFixed(1); }).join(' ') + '" fill="none" stroke="' + c + '" stroke-width="' + w + '" stroke-linejoin="round" ' + (extra || '') + '/>';
  };
  var rect = function (x, y, w, h, f, st, extra) {
    return '<rect x="' + x + '" y="' + y + '" width="' + w + '" height="' + h + '" fill="' + f + '"' + (st ? ' stroke="' + st + '" stroke-width="1.6"' : '') + ' ' + (extra || '') + '/>';
  };
  var text = function (x, y, cls, t) { return '<text x="' + x + '" y="' + y + '" class="' + cls + '">' + t + '</text>'; };

  // dotted grid of price pane
  var py = function (p) { return Math.round(716 - (p - 4.4) * 238.7); };
  var dots = 'stroke-dasharray="2 4"';
  for (var p = 6.8; p > 4.7; p -= 0.2) s += line(0, py(p) + .5, 1711, py(p) + .5, '#c00000', 1, dots);
  s += line(1621, py(4.6) + .5, 1711, py(4.6) + .5, '#c00000', 1, dots);
  s += line(1621, py(4.4) + .5, 1711, py(4.4) + .5, '#c00000', 1, dots);

  // candles
  s += '<g shape-rendering="crispEdges">';
  K.forEach(function (k) {
    var x = cx(k[0]), t = k[5], c = (t === 'r' || t === 'm') ? RED : t === 'w' ? '#ffffff' : CY;
    s += rect(x - 1, k[1], 2, k[4] - k[1], c);
    if (t === 'r') s += rect(x - 4, k[2], 9, Math.max(k[3] - k[2], 3), '#000', RED);
    else if (t === 'c') s += rect(x - 5, k[2], 10, Math.max(k[3] - k[2], 1), CY);
    else if (t === 'm') s += rect(x - 5, k[2], 11, 2, '#ff00ff');
    else s += rect(x - 5, k[2], 10, 2, c);
  });
  s += '</g>';

  // moving averages; the yellow line breaks where it passes the special candle
  s += poly(YEL.filter(function (q) { return q[0] < 800; }), '#ffff00', 3) + poly(YEL.filter(function (q) { return q[0] > 800; }), '#ffff00', 3);
  s += poly(REDL, '#ff0000', 3);

  // special candles sit over the lines
  s += '<g shape-rendering="crispEdges">';
  SP.forEach(function (k) {
    var x = cx(k[0]);
    if (k[5] > k[4]) s += rect(x - 1, k[4], 2, k[5] - k[4], k[8]);
    s += rect(x - 7, k[1], 14, k[2] - k[1], k[6]) + rect(x - 7, k[2], 14, k[3] - k[2], k[7]);
  });
  s += '</g>';

  // signal icons
  [[70, 218], [238, 179], [1047, 322]].forEach(function (h) { s += '<use href="#hand" x="' + h[0] + '" y="' + h[1] + '"/>'; });
  [[108, 179], [853, 519]].forEach(function (h) {
    s += '<use href="#bag" x="' + h[0] + '" y="' + h[1] + '"/>';
    s += '<text x="' + (h[0] - 4) + '" y="' + (h[1] + 7) + '" class="sm" fill="#8a4030" font-weight="bold">$</text>';
  });

  // mask of the band the terminal leaves black, and the low label below it
  s += text(785, 759, 'tx-w sm', '4.20') + line(764, 752, 770, 756, '#aaa', 1.5);
  s += rect(0, 644, 1621, 106, '#000');

  // chart annotations
  s += line(108, 99, 108, 106, '#ff3030', 2) + line(108, 99, 125, 104, '#bbb', 1.4) + text(130, 112, 'tx-w', '6.99');
  s += text(597, 136, 'tx-g tx-long', '【600973宝胜股份 行业: 电气设备 地域: 江苏板块 概念: 大飞机 物联网 铁路基建 核电核能 光伏 风电 特斯拉 智能电网 超导概念 央企改革');
  s += text(1095, 168, 'tx-c', '5日总换手率累计: 19.31') + text(1102, 201, 'tx-c', '10日换手率累计: 25.84');
  s += text(1371, 168, 'tx-g', '流通市值') + text(1442, 168, 'tx-g', '34.101');
  s += text(17, 456, 'tx-p', '撬板') + text(146, 400, 'tx-p', '撬板');
  s += text(891, 300, 'tx-lg', '炸板') + text(802, 545, 'tx-lg', '炸板') + text(1457, 581, 'tx-lg', '炸板');

  // bottom badges of the price pane
  [[431, '#2e8b57', '减'], [970, '#1d5f9f', '财'], [1637, '#9a5a1a', '榜']].forEach(function (b) {
    s += rect(b[0] - 10, 759, 20, 20, b[1]) + '<text x="' + b[0] + '" y="775" class="tx-k sm">' + b[2] + '</text>';
  });
  s += '<path d="M1669 74 L1676 82 L1669 90 L1662 82Z" fill="none" stroke="#aaa" stroke-width="1.4"/>';
  s += '<rect x="1691" y="76" width="13" height="14" rx="2" fill="#333" stroke="#888" stroke-width="1.5"/><rect x="1698" y="78" width="3" height="10" fill="#aaa"/>';

  // KDJ: resample per bar so the lines step from bar to bar, with the small wobble the values have
  var jag = function (a, amp, phase) {
    var pts = a.map(function (q) { return [q[0] * 1.3776, q[1] * 1.3776]; }), out = [], j = 0;
    for (var i = 0; i < 130; i++) {
      var x = 6.8 + 12.84 * i;
      while (j < pts.length - 2 && pts[j + 1][0] < x) j++;
      var t = (x - pts[j][0]) / (pts[j + 1][0] - pts[j][0]);
      if (t > 1) continue;
      t = Math.max(t, 0);
      var y = pts[j][1] + t * (pts[j + 1][1] - pts[j][1]);
      y += amp * Math.sin(i * 2.4 + phase) * Math.cos(i * 0.9);
      out.push([x, Math.min(y, 1084)]);
    }
    return out;
  };
  s += poly(jag(K_D, 0.8, 1), '#e8e800', 1.4) + poly(jag(K_K, 2, 2), '#e8e8e8', 1.4) + poly(jag(K_J, 5, 0), '#d030d0', 1.4);

  // volume
  s += line(0, 1132.5, 1711, 1132.5, '#c00000', 1, dots) + line(0, 1206.5, 1711, 1206.5, '#c00000', 1, dots);
  s += '<g shape-rendering="crispEdges">';
  V1.forEach(function (v, i) {
    var top = Math.round(1090 + (+v.slice(1)) / 3), x = cx(i);
    s += v[0] === 'C' ? rect(x - 5, top, 10, 1280 - top, CY) : rect(x - 4, top, 9, 1280 - top, '#000', RED);
  });
  s += '</g>';
  s += poly(VW, '#eeeeee', 1.3) + poly(VY, '#d8d800', 2);

  // pane frames
  s += '<g shape-rendering="crispEdges">';
  s += line(0.5, 67, 0.5, 1281, '#555', 1);
  s += line(1711, 67, 1711, 1306, DK, 2) + line(1787, 67, 1787, 1306, DK, 2);
  s += line(0, 782, 1788, 782, DK, 2) + line(0, 1093, 1788, 1093, DK, 2) + line(1711, 1095, 1788, 1095, DK, 2) + line(0, 1281, 1788, 1281, DK, 2);
  for (p = 7.0; p > 4.3; p -= 0.1) {
    var big = Math.round(p * 10) % 2 === 0;
    s += line(1712, py(p), big ? 1718 : 1715, py(p), '#d02020', 1);
  }
  s += '</g>';
  for (p = 7.0; p > 4.3; p -= 0.2) s += text(1778, py(p) + 7, 'ax', p.toFixed(2));
  s += rect(1712, 730, 75, 23, '#000088') + line(1712, 730, 1787, 730, DK, 2) + line(1712, 753, 1787, 753, DK, 2) + text(1714, 748, 'tx-w', '4.24');

  [['100.00', 843], ['80.00', 887], ['50.00', 954], ['20.00', 1021], ['0.00', 1066]].forEach(function (a) {
    s += text(1778, a[1] + 7, 'ax', a[0]) + line(1712, a[1], 1718, a[1], '#d02020', 1);
  });
  [['10000', 1132], ['7500', 1171], ['5000', 1206]].forEach(function (a) {
    s += text(1778, a[1] + 7, 'ax', a[0]) + line(1712, a[1], 1718, a[1], '#d02020', 1);
  });
  s += '<rect x="1712" y="1259" width="48" height="22" fill="#000" stroke="#a00000" stroke-width="1.5"/>' + text(1714, 1277, 'tx-r', 'X100');

  // date axis
  [[210, '8'], [507, '9'], [776, '10'], [980, '11'], [1265, '12'], [1547, '1']].forEach(function (d) {
    s += line(d[0], 1282, d[0], 1306, DK, 2) + text(d[0] + 3, 1302, 'tx-r', d[1]);
  });
  s += text(6, 1302, 'tx-r', '2022年');
  s += rect(556, 1282, 116, 24, '#000088', '#a00000') + text(558, 1302, 'tx-w', '2022/09/07/三');
  s += text(1728, 1302, 'tx-w', '日线');
  for (var m = 70; m < 1700; m += 74) s += line(m, 1282, m, 1286, DK, 1);

  svg.innerHTML = s;
})();
```
